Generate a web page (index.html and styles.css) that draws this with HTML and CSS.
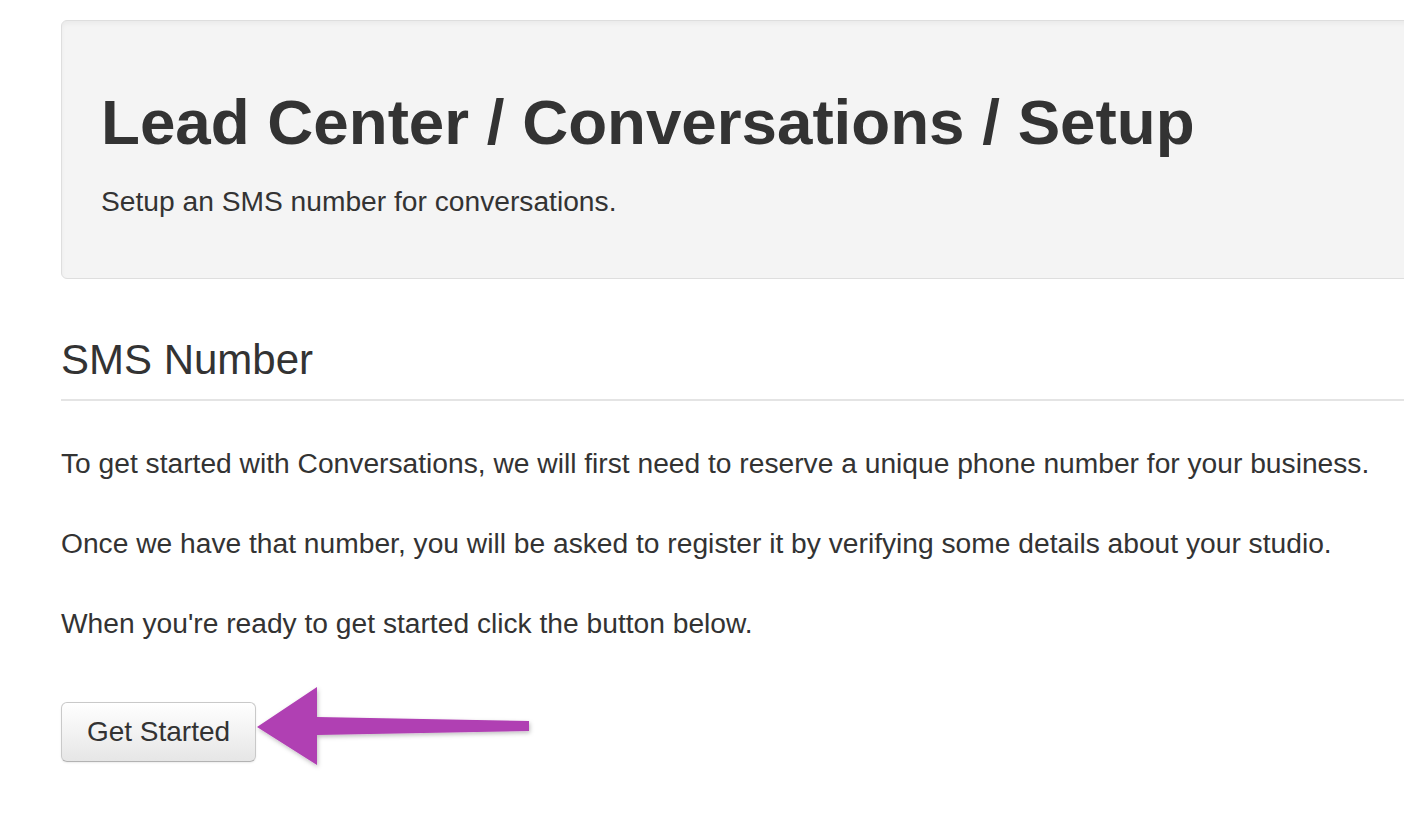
FILE: index.html
```html
<!DOCTYPE html>
<html lang="en">
<head>
  <meta charset="utf-8" />
  <title>Lead Center / Conversations / Setup</title>
  <link rel="stylesheet" href="styles.css">
</head>
<body>
  <div class="page">
    <div class="hero">
      <h1>Lead Center / Conversations / Setup</h1>
      <p>Setup an SMS number for conversations.</p>
    </div>

    <div class="section-header">
      <h2>SMS Number</h2>
    </div>

    <div class="intro">
      <p>To get started with Conversations, we will first need to reserve a unique phone number for your business.</p>
      <p>Once we have that number, you will be asked to register it by verifying some details about your studio.</p>
      <p>When you're ready to get started click the button below.</p>
    </div>

    <div class="actions">
      <button class="btn">Get Started</button>
      <svg class="arrow" width="290" height="100" viewBox="0 0 290 100">
        <defs>
          <filter id="shadow" x="-10%" y="-20%" width="120%" height="150%">
            <feDropShadow dx="1" dy="2" stdDeviation="2" flood-color="#000" flood-opacity="0.25" />
          </filter>
        </defs>
        <path d="M2 45 L62 5 L62 35 L274 39 L274 49 L62 53 L62 83 Z" fill="#b03fb3" filter="url(#shadow)" />
      </svg>
    </div>
  </div>
</body>
</html>
```

FILE: styles.css
```css
* {
  box-sizing: border-box;
  margin: 0;
  padding: 0;
}
body {
  font-family: "Liberation Sans", Arial, sans-serif;
  color: #333;
  background: #fff;
  overflow: hidden;
}
.page {
  padding: 20px 0 0 61px;
  width: 1460px;
}
.hero {
  background: #f4f4f4;
  border: 1px solid #dedede;
  border-radius: 6px;
  box-shadow: inset 0 3px 4px rgba(0, 0, 0, 0.04);
  height: 259px;
  padding: 66px 0 0 39px;
}
.hero h1 {
  font-size: 63.7px;
  font-weight: bold;
  line-height: 70px;
  color: #333;
}
.hero p {
  font-size: 28.2px;
  line-height: 32px;
  margin-top: 28px;
}
.section-header {
  margin-top: 56px;
  border-bottom: 2px solid #e4e4e4;
  padding-bottom: 14px;
}
.section-header h2 {
  font-size: 42px;
  font-weight: normal;
  line-height: 50px;
}
.intro {
  display: flex;
  flex-direction: column;
  gap: 44px;
  margin-top: 44px;
}
.intro p {
  font-size: 28.2px;
  line-height: 36px;
}
.actions {
  display: flex;
  align-items: center;
  margin-top: 41px;
}
.btn {
  font-family: "Liberation Sans", Arial, sans-serif;
  font-size: 28px;
  color: #333;
  width: 195px;
  height: 60px;
  border: 1px solid #c9c9c9;
  border-bottom-color: #b3b3b3;
  border-radius: 6px;
  background: linear-gradient(#ffffff, #e6e6e6);
  box-shadow: inset 0 1px 0 rgba(255, 255, 255, 0.3), 0 1px 2px rgba(0, 0, 0, 0.08);
}
.arrow {
  margin-left: -1px;
}
```
